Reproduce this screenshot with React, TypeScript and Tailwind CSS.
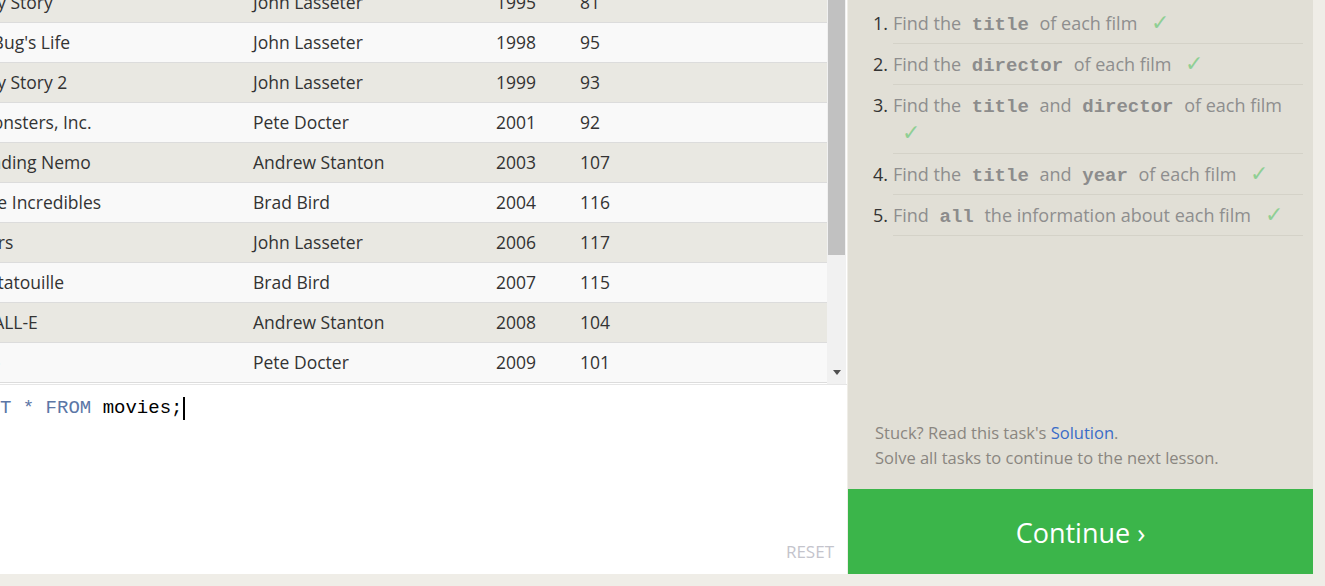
import React from "react";

const films = [
  { title: "Toy Story", director: "John Lasseter", year: 1995, length: 81 },
  { title: "A Bug's Life", director: "John Lasseter", year: 1998, length: 95 },
  { title: "Toy Story 2", director: "John Lasseter", year: 1999, length: 93 },
  { title: "Monsters, Inc.", director: "Pete Docter", year: 2001, length: 92 },
  { title: "Finding Nemo", director: "Andrew Stanton", year: 2003, length: 107 },
  { title: "The Incredibles", director: "Brad Bird", year: 2004, length: 116 },
  { title: "Cars", director: "John Lasseter", year: 2006, length: 117 },
  { title: "Ratatouille", director: "Brad Bird", year: 2007, length: 115 },
  { title: "WALL-E", director: "Andrew Stanton", year: 2008, length: 104 },
  { title: "Up", director: "Pete Docter", year: 2009, length: 101 },
];

const Code: React.FC<{ children: React.ReactNode }> = ({ children }) => (
  <code className="px-[6px] font-['Liberation_Mono',monospace] text-[19px] leading-none font-bold text-[#8c8c8c]">
    {children}
  </code>
);

const Check = () => <span className="ml-[9px] text-[22px] leading-none text-[#8fcf94]">✓</span>;

const tasks: React.ReactNode[] = [
  <>Find the <Code>title</Code> of each film</>,
  <>Find the <Code>director</Code> of each film</>,
  <>Find the <Code>title</Code> and <Code>director</Code> of each film</>,
  <>Find the <Code>title</Code> and <Code>year</Code> of each film</>,
  <>Find <Code>all</Code> the information about each film</>,
];

const ResultsTable = () => (
  <div className="flex h-[384px] bg-white">
    <div className="w-[827px] overflow-hidden">
      <div className="-ml-[23px] -mt-[17px]">
        {films.map((f, i) => (
          <div
            key={f.title}
            className={`grid h-[40px] grid-cols-[276px_243px_84px_1fr] items-center border-b border-[#dcdcdc] text-[17.5px] text-[#333] ${
              i % 2 === 0 ? "bg-[#e9e8e2]" : "bg-[#f9f9f9]"
            }`}
          >
            <span>{f.title}</span>
            <span>{f.director}</span>
            <span>{f.year}</span>
            <span>{f.length}</span>
          </div>
        ))}
      </div>
    </div>
    <div className="flex w-[19px] flex-col bg-[#f1f1f1]">
      <div className="ml-[1px] h-[255px] w-[17px] bg-[#c1c1c1]" />
      <div className="flex-1" />
      <div className="mb-[9px] flex justify-center">
        <svg width="8" height="5" viewBox="0 0 8 5">
          <path d="M0 0 H8 L4 5 Z" fill="#505050" />
        </svg>
      </div>
    </div>
  </div>
);

const Editor = () => (
  <div className="flex h-[190px] flex-col overflow-hidden border-t border-[#e6e6e6] bg-white">
    <div className="-ml-[57px] mt-[11px] flex h-[24px] items-center whitespace-pre font-['Liberation_Mono',monospace] text-[19px] leading-[24px]">
      <span className="text-[#5b76a6]">SELECT * FROM </span>
      <span className="text-black">movies;</span>
      <span className="ml-[1px] h-[23px] w-[2px] bg-black" />
    </div>
    <div className="flex-1" />
    <div className="mb-[10px] mr-[13px] self-end text-[17px] text-[#c4c4cc]">RESET</div>
  </div>
);

export default function App() {
  return (
    <div className="flex h-[586px] w-[1325px] overflow-hidden bg-[#efede7] font-['Open_Sans',sans-serif]">
      <div className="flex h-[574px] w-[847px] flex-col">
        <ResultsTable />
        <Editor />
      </div>
      <div className="ml-[1px] flex h-[574px] w-[465px] flex-col bg-[#e1dfd6]">
        <ol className="pt-[3px] pl-[25px] pr-[10px]">
          {tasks.map((t, i) => (
            <li key={i} className="flex text-[18px] leading-[28px]">
              <span className="w-[20px] shrink-0 pt-[6px] text-[#333]">{i + 1}.</span>
              <div className="flex-1 border-b border-[#d4d2c8] pt-[6px] pb-[6px] text-[#8e8e8e]">
                {t} <Check />
              </div>
            </li>
          ))}
        </ol>
        <div className="flex-1" />
        <div className="px-[27px] pb-[19px] text-[16.5px] leading-[25px] text-[#8a8680]">
          <p>
            Stuck? Read this task's <span className="text-[#3a6cc8]">Solution</span>.
          </p>
          <p>Solve all tasks to continue to the next lesson.</p>
        </div>
        <button className="flex h-[85px] items-center justify-center bg-[#3bb54a] pt-[4px] text-[27px] text-white">
          Continue ›
        </button>
      </div>
    </div>
  );
}
